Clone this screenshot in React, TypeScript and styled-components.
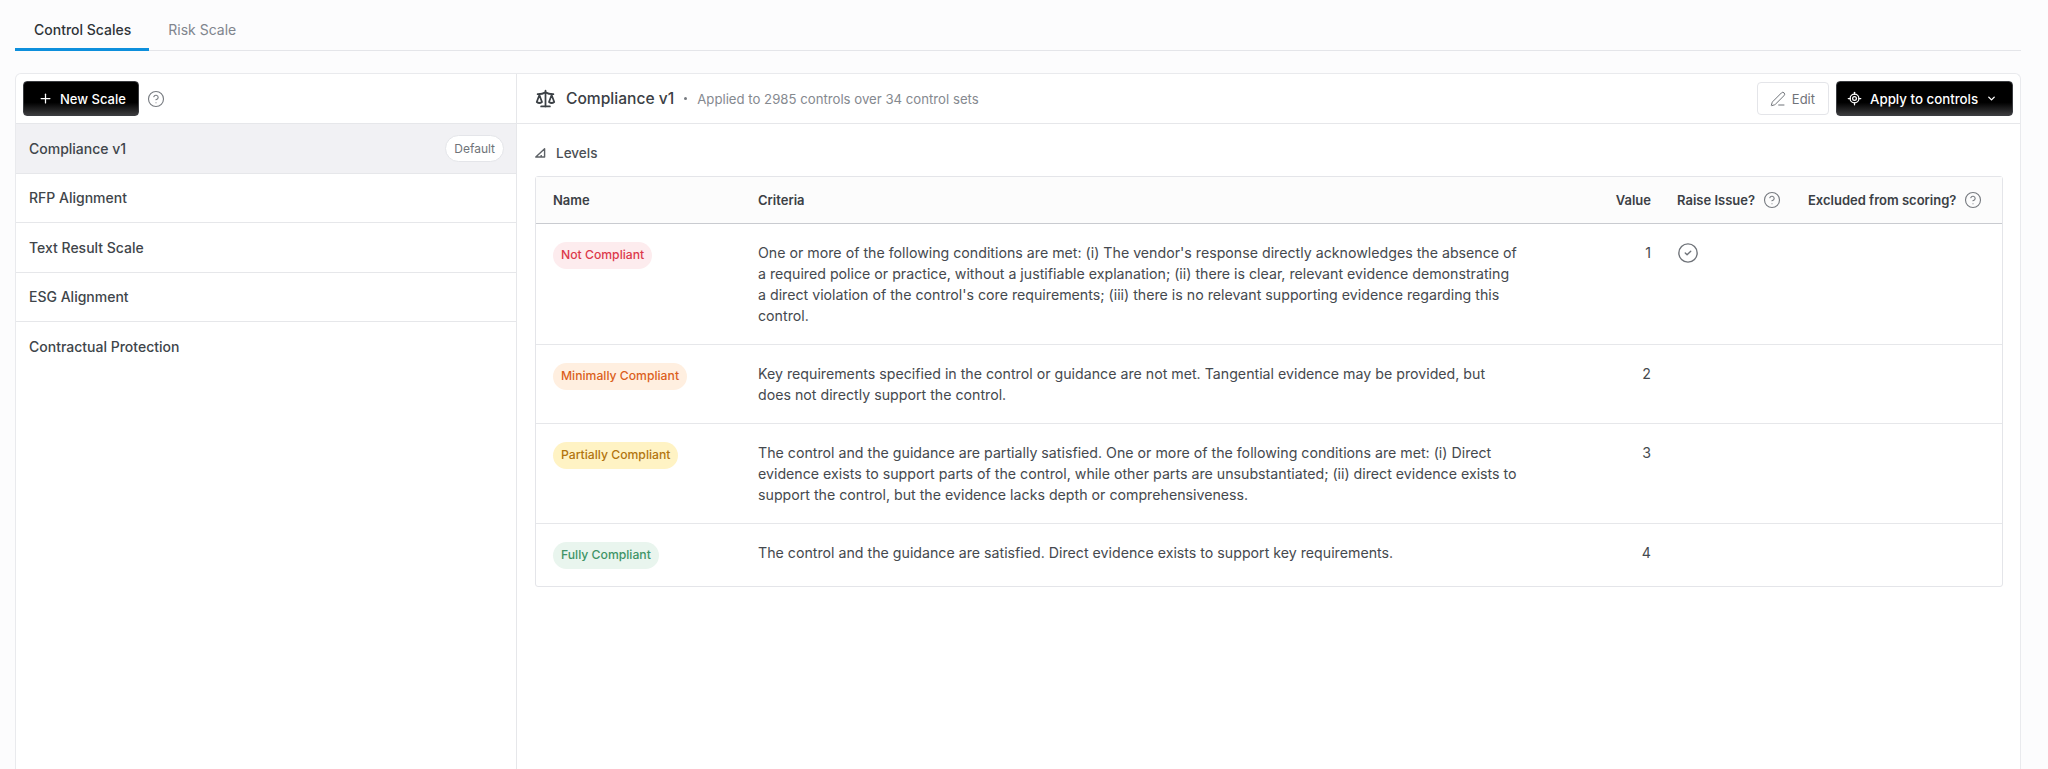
import * as React from 'react'
import styled, { createGlobalStyle } from 'styled-components'
import { CircleCheck, CircleHelp, ChevronDown, LocateFixed, PenLine, Plus, Scale } from 'lucide-react'

const GlobalStyle = createGlobalStyle`
  html, body {
    margin: 0;
    height: 100%;
    overflow: hidden;
    background: #fcfcfd;
  }
  body {
    font-family: Inter, "Liberation Sans", sans-serif;
    color: #3f4449;
  }
  * {
    box-sizing: border-box;
  }
`

const Page = styled.div`
  height: 769px;
  padding: 0 27px 0 15px;
  display: flex;
  flex-direction: column;
`

const Tabs = styled.div`
  height: 51px;
  display: flex;
  border-bottom: 1px solid #e4e5e9;
`

const Tab = styled.div<{ $active?: boolean }>`
  height: 51px;
  padding: 10px 18px 0 19px;
  display: flex;
  align-items: center;
  font-size: 14px;
  font-weight: ${p => (p.$active ? 500 : 400)};
  color: ${p => (p.$active ? '#2f3438' : '#80858d')};
  border-bottom: 3px solid ${p => (p.$active ? '#0d8fdc' : 'transparent')};
`

const Card = styled.div`
  margin-top: 22px;
  flex: 1;
  display: flex;
  background: #fff;
  border: 1px solid #e9eaed;
  border-bottom: none;
  border-radius: 6px 6px 0 0;
`

const Sidebar = styled.div`
  width: 501px;
  flex-shrink: 0;
  border-right: 1px solid #e6e7ea;
`

const SidebarHead = styled.div`
  height: 50px;
  padding: 0 7px;
  display: flex;
  align-items: center;
  gap: 8px;
  border-bottom: 1px solid #e6e7ea;
`

const DarkButton = styled.button`
  height: 35px;
  padding: 0 12px 0 14px;
  display: inline-flex;
  align-items: center;
  gap: 7px;
  white-space: nowrap;
  border: 1px solid #3a3c40;
  border-radius: 4px;
  background: linear-gradient(180deg, #000 0%, #000 62%, #3b3b3d 100%);
  color: #fff;
  font-family: inherit;
  font-size: 13px;
  font-weight: 500;
`

const HelpIcon = styled(CircleHelp)`
  width: 18px;
  height: 18px;
  color: #777b80;
  flex-shrink: 0;
`

const ScaleRow = styled.div<{ $active?: boolean }>`
  height: 49.5px;
  padding: 0 12px 0 13px;
  display: flex;
  align-items: center;
  justify-content: space-between;
  font-size: 14px;
  font-weight: 500;
  color: #40454a;
  background: ${p => (p.$active ? '#f1f1f4' : 'transparent')};
  border-bottom: 1px solid #e6e7ea;

  &:last-child {
    border-bottom: none;
  }
`

const DefaultBadge = styled.span`
  height: 27px;
  padding: 0 8px;
  display: inline-flex;
  align-items: center;
  border: 1px solid #e4e5e9;
  border-radius: 14px;
  background: #fff;
  font-size: 12px;
  font-weight: 400;
  color: #6f7379;
`

const Detail = styled.div`
  flex: 1;
  min-width: 0;
`

const DetailHead = styled.div`
  height: 50px;
  padding: 0 7px 0 18px;
  display: flex;
  align-items: center;
  border-bottom: 1px solid #e6e7ea;
`

const Title = styled.span`
  margin-left: 10px;
  font-size: 15.6px;
  font-weight: 500;
  color: #3b4045;
`

const Dot = styled.span`
  width: 3px;
  height: 3px;
  margin: 0 10px;
  border-radius: 50%;
  background: #777b80;
`

const Applied = styled.span`
  font-size: 13.2px;
  color: #85898f;
`

const Actions = styled.div`
  margin-left: auto;
  display: flex;
  align-items: center;
  gap: 7px;
`

const EditButton = styled.button`
  height: 33px;
  padding: 0 13px 0 12px;
  display: inline-flex;
  align-items: center;
  gap: 6px;
  border: 1px solid #e4e5e9;
  border-radius: 4px;
  background: #fff;
  color: #6f7379;
  font-family: inherit;
  font-size: 13px;
`

const ApplyButton = styled(DarkButton)`
  width: 177px;
  padding: 0 0 0 10px;
  gap: 8px;
  font-size: 13.3px;
`

const Body = styled.div`
  padding: 0 17px 0 18px;
`

const SectionLabel = styled.div`
  height: 52px;
  display: flex;
  align-items: center;
  gap: 10px;
  padding-top: 5px;
  font-size: 13.5px;
  font-weight: 500;
  color: #4a4f54;
`

const TableBox = styled.div`
  border: 1px solid #e4e5e9;
  border-radius: 3px;
`

const Grid = styled.div`
  display: grid;
  grid-template-columns: 222px 1fr 76px 131px 220px;
`

const HeadRow = styled(Grid)`
  height: 47px;
  background: #fcfcfc;
  border-bottom: 1px solid #c9cbd0;
  align-items: center;
  font-size: 13px;
  font-weight: 600;
  color: #3b4045;
  white-space: nowrap;
`

const LevelRow = styled(Grid)`
  padding: 18px 0;
  border-bottom: 1px solid #e6e7ea;
  font-size: 14.2px;
  line-height: 21px;
  color: #45494e;

  &:last-child {
    padding-bottom: 17px;
    border-bottom: none;
  }
`

const NameCell = styled.div`
  padding-left: 17px;
`

const ValueCell = styled.div`
  text-align: right;
`

const FlagCell = styled.div`
  padding-left: 26px;
  display: flex;
  align-items: flex-start;
  gap: 8px;
`

const HeadFlag = styled(FlagCell)`
  align-items: center;
`

const Criteria = styled.div`
  max-width: 762px;
`

const Pill = styled.span<{ $bg: string; $fg: string }>`
  height: 27px;
  padding: 0 8px;
  display: inline-flex;
  align-items: center;
  border-radius: 14px;
  background: ${p => p.$bg};
  color: ${p => p.$fg};
  font-size: 12.2px;
  font-weight: 500;
  line-height: 1;
`

const CheckIcon = styled(CircleCheck)`
  width: 22px;
  height: 22px;
  color: #6f7379;
`

const LevelsIcon = () => (
  <svg width="11" height="10" viewBox="0 0 11 10" fill="none" stroke="#5d6166" strokeWidth="1.4" strokeLinejoin="round">
    <path d="M9.6 0.8 L0.8 9 H9.6 Z" />
    <path d="M6.2 9 V7" />
  </svg>
)

const scales = ['Compliance v1', 'RFP Alignment', 'Text Result Scale', 'ESG Alignment', 'Contractual Protection']

const levels = [
  {
    name: 'Not Compliant',
    bg: '#fdecee',
    fg: '#dc3a4b',
    value: 1,
    raise: true,
    criteria:
      "One or more of the following conditions are met: (i) The vendor's response directly acknowledges the absence of a required police or practice, without a justifiable explanation; (ii) there is clear, relevant evidence demonstrating a direct violation of the control's core requirements; (iii) there is no relevant supporting evidence regarding this control.",
  },
  {
    name: 'Minimally Compliant',
    bg: '#ffefe0',
    fg: '#db5f1c',
    value: 2,
    raise: false,
    criteria:
      'Key requirements specified in the control or guidance are not met. Tangential evidence may be provided, but does not directly support the control.',
  },
  {
    name: 'Partially Compliant',
    bg: '#fff3c4',
    fg: '#b2750f',
    value: 3,
    raise: false,
    criteria:
      'The control and the guidance are partially satisfied. One or more of the following conditions are met: (i) Direct evidence exists to support parts of the control, while other parts are unsubstantiated; (ii) direct evidence exists to support the control, but the evidence lacks depth or comprehensiveness.',
  },
  {
    name: 'Fully Compliant',
    bg: '#e9f5ee',
    fg: '#3f9467',
    value: 4,
    raise: false,
    criteria: 'The control and the guidance are satisfied. Direct evidence exists to support key requirements.',
  },
]

export default function App() {
  return (
    <Page>
      <GlobalStyle />
      <Tabs>
        <Tab $active>Control Scales</Tab>
        <Tab>Risk Scale</Tab>
      </Tabs>
      <Card>
        <Sidebar>
          <SidebarHead>
            <DarkButton>
              <Plus size={15} strokeWidth={2} />
              New Scale
            </DarkButton>
            <HelpIcon strokeWidth={1.5} />
          </SidebarHead>
          {scales.map((scale, i) => (
            <ScaleRow key={scale} $active={i === 0}>
              {scale}
              {i === 0 && <DefaultBadge>Default</DefaultBadge>}
            </ScaleRow>
          ))}
        </Sidebar>
        <Detail>
          <DetailHead>
            <Scale size={21} color="#3b4045" strokeWidth={2} />
            <Title>Compliance v1</Title>
            <Dot />
            <Applied>Applied to 2985 controls over 34 control sets</Applied>
            <Actions>
              <EditButton>
                <PenLine size={16} strokeWidth={1.5} />
                Edit
              </EditButton>
              <ApplyButton>
                <LocateFixed size={15} strokeWidth={2} />
                Apply to controls
                <ChevronDown size={11} strokeWidth={3} />
              </ApplyButton>
            </Actions>
          </DetailHead>
          <Body>
            <SectionLabel>
              <LevelsIcon />
              Levels
            </SectionLabel>
            <TableBox>
              <HeadRow>
                <NameCell>Name</NameCell>
                <div>Criteria</div>
                <ValueCell>Value</ValueCell>
                <HeadFlag>
                  Raise Issue? <HelpIcon strokeWidth={1.5} />
                </HeadFlag>
                <HeadFlag>
                  Excluded from scoring? <HelpIcon strokeWidth={1.5} />
                </HeadFlag>
              </HeadRow>
              {levels.map(level => (
                <LevelRow key={level.name}>
                  <NameCell>
                    <Pill $bg={level.bg} $fg={level.fg}>
                      {level.name}
                    </Pill>
                  </NameCell>
                  <Criteria>{level.criteria}</Criteria>
                  <ValueCell>{level.value}</ValueCell>
                  <FlagCell>{level.raise && <CheckIcon strokeWidth={1.5} />}</FlagCell>
                  <FlagCell />
                </LevelRow>
              ))}
            </TableBox>
          </Body>
        </Detail>
      </Card>
    </Page>
  )
}
